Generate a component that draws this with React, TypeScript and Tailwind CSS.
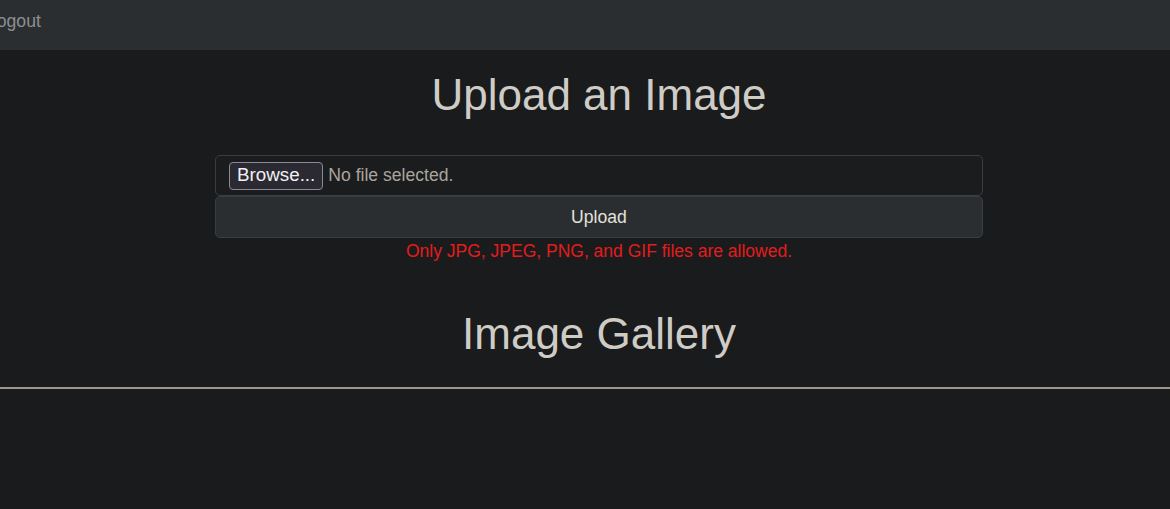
import React from "react";

export default function App() {
  return (
    <div className="min-h-[509px] w-[1170px] bg-[#1a1b1d] font-['Liberation_Sans',Arial,sans-serif] overflow-hidden">
      <nav className="h-[50px] bg-[#2b2e31] flex items-start pt-[9px]">
        <span className="ml-[-13px] text-[17.6px] leading-[24px] text-[#8d8f91]">Logout</span>
      </nav>
      <div className="flex flex-col items-center pl-[28px]">
        <h1 className="mt-[18px] text-[44px] leading-[53px] text-[#cfccc6]">Upload an Image</h1>
        <div className="mt-[34px] w-[768px] flex flex-col">
          <div className="h-[41px] border border-[#3b3e41] rounded-[5px] bg-[#1b1c1e] flex items-center pl-[13px]">
            <div className="h-[28px] px-[7px] border border-[#8a8a98] rounded-[4px] bg-[#2b2a33] text-[18.8px] text-[#f0f0f4] flex items-center leading-none">Browse...</div>
            <span className="ml-[5px] text-[17.6px] text-[#aaa59c]">No file selected.</span>
          </div>
          <button className="h-[42px] border border-[#3b3e41] rounded-[5px] bg-[#2b2e31] text-[17.6px] text-[#e3e1dd]">Upload</button>
          <p className="text-center text-[17.5px] leading-[26px] text-[#e41c1c]">Only JPG, JPEG, PNG, and GIF files are allowed.</p>
        </div>
        <h2 className="mt-[43px] text-[44px] leading-[53px] text-[#cfccc6]">Image Gallery</h2>
      </div>
      <hr className="mt-[27px] border-0 h-[2px] bg-[#a09886]" />
    </div>
  );
}
